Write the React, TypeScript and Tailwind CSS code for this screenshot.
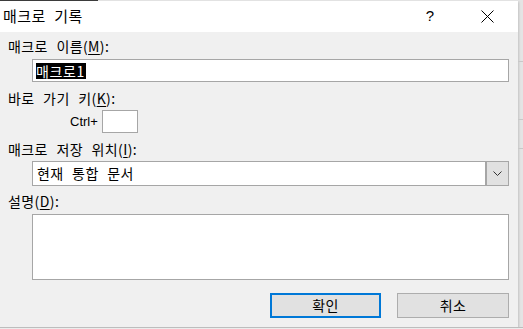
import { useState } from "react"

const KR = "font-['Malgun_Gothic','Noto_Sans_CJK_KR',sans-serif]"

function Label({ text, mnemonic, suffix }: { text: string; mnemonic: string; suffix?: string }) {
  return (
    <div className={`h-5 text-[14px] leading-5 tracking-[0.4px] [word-spacing:5px] text-black ${KR}`}>
      {text}(<span className="underline underline-offset-2">{mnemonic}</span>){suffix ?? ":"}
    </div>
  )
}

export default function App() {
  const [desc, setDesc] = useState("")

  return (
    <div className="w-[523px] h-[329px] bg-[#e4e4e4] overflow-hidden flex flex-col">
      {/* sheet behind dialog */}
      <div className="h-px w-[98px] bg-[#3c3c3c] shrink-0" />
      <div className="flex">
        <div className="w-[518px] h-[326px] flex flex-col bg-[#f0f0f0] shadow-[1px_1px_2px_rgba(0,0,0,0.15)]">
          {/* Title bar */}
          <div className="h-[31px] bg-white flex items-center pl-[3px] pr-6">
            <span className={`text-[15px] tracking-[0.4px] [word-spacing:5px] text-black ${KR}`}>매크로 기록</span>
            <span className="ml-auto mr-[47px] text-[15px] font-['Liberation_Sans',sans-serif] text-black">?</span>
            <svg width="13" height="13" viewBox="0 0 13 13" className="text-black">
              <path d="M0.5 0.5 L12.5 12.5 M12.5 0.5 L0.5 12.5" stroke="currentColor" strokeWidth="1" />
            </svg>
          </div>

          {/* Body */}
          <div className="flex flex-col pl-2 pr-[9px] pt-1">
            <Label text="매크로 이름" mnemonic="M" />
            <div className="mt-[3px] ml-6 h-[23px] bg-white border border-[#a6a6a6] flex items-center pl-[3px]">
              <span className={`bg-black text-white text-[14px] leading-4 tracking-[0.6px] pr-px ${KR}`}>매크로1</span>
            </div>

            <div className="mt-[6px]">
              <Label text="바로 가기 키" mnemonic="K" />
            </div>
            <div className="mt-[2px] flex items-center">
              <span className="ml-[62px] text-[13px] font-['Liberation_Sans',sans-serif] text-black">Ctrl+</span>
              <div className="ml-1 w-9 h-[23px] bg-white border border-[#a6a6a6]" />
            </div>

            <div className="mt-[6px]">
              <Label text="매크로 저장 위치" mnemonic="I" />
            </div>
            <div className="mt-[2px] ml-6 h-[25px] bg-white border border-[#a6a6a6] flex">
              <span className={`flex-1 pl-1 text-[14px] leading-[23px] tracking-[0.4px] [word-spacing:5px] text-black ${KR}`}>현재 통합 문서</span>
              <div className="w-[22px] bg-[#e1e1e1] border-l border-[#a6a6a6] outline outline-1 outline-[#a6a6a6] flex items-center justify-center">
                <svg width="9" height="5" viewBox="0 0 9 5">
                  <path d="M0.5 0.5 L4.5 4.5 L8.5 0.5" stroke="#333" strokeWidth="1" fill="none" />
                </svg>
              </div>
            </div>

            <div className="mt-[5px]">
              <Label text="설명" mnemonic="D" />
            </div>
            <textarea
              value={desc}
              onChange={e => setDesc(e.target.value)}
              className="mt-[3px] ml-6 h-[66px] bg-white border border-[#a6a6a6] resize-none outline-none"
            />

            <div className="mt-[13px] flex justify-end gap-4">
              <button className={`w-[111px] h-[25px] bg-[#e1e1e1] border-2 border-[#0078d7] text-[14px] tracking-[0.4px] text-black ${KR}`}>
                확인
              </button>
              <button className={`w-[112px] h-[25px] bg-[#e1e1e1] border border-[#adadad] text-[14px] tracking-[0.4px] text-black ${KR}`}>
                취소
              </button>
            </div>
          </div>
        </div>
        <div className="flex-1 flex flex-col">
          <div className="h-[61px] border-b border-[#c8c8c8]" />
          <div className="h-[58px] border-b border-[#c8c8c8]" />
          <div className="h-[29px] border-b border-[#c8c8c8]" />
        </div>
      </div>
      <div className="flex-1 bg-[#ececec] border-t border-[#bdbdbd]" />
    </div>
  )
}
